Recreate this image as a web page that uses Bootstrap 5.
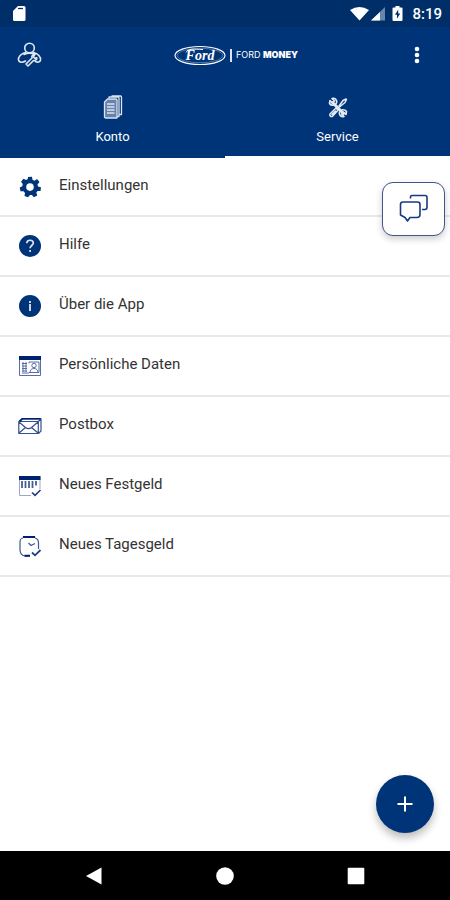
<!DOCTYPE html>
<html lang="de">
<head>
<meta charset="utf-8">
<meta name="viewport" content="width=device-width, initial-scale=1">
<title>Ford Money</title>
<link href="https://cdn.jsdelivr.net/npm/bootstrap@5.3.0/dist/css/bootstrap.min.css" rel="stylesheet">
<style>
  :root { --ford: #003478; --ford-dark: #002e69; }
  body { font-family: Roboto, "Liberation Sans", sans-serif; font-size: 14px; line-height: 20px; color: #333; }
  svg { display: block; flex: none; }
  .bg-ford { background: var(--ford); }
  .status-bar { background: var(--ford-dark); height: 27px; padding: 0 8px 0 12px; font-size: 15px; font-weight: 500; }
  .app-bar { height: 56px; padding: 0 16px; }
  .brand { padding-left: 28px; }
  .brand-name { font: 9px/12px Inter, sans-serif; }
  .brand-name b { font-weight: 900; }
  .brand-rule { width: 2px; height: 13px; background: #dce4ef; }
  .tab { height: 75px; padding-top: 12px; border: 0; border-bottom: 2px solid var(--ford); background: var(--ford); color: #fff; font-size: 13px; gap: 7px; }
  .tab.active { border-bottom-color: #fff; }
  .menu-row { height: 60px; padding: 0 18px 4px; gap: 17px; border-bottom: 2px solid #e9e9e9; color: #333; font-size: 15px; }
  .menu-row:first-child { height: 59px; padding-bottom: 3px; }
  .menu-row svg { margin-top: 4px; color: var(--ford); }
  .chat { top: 182px; right: 5px; width: 63px; height: 54px; border: 1px solid #40558f; border-radius: 11px; box-shadow: 0 3px 7px #0003; }
  .add { right: 16px; bottom: 18px; width: 58px; height: 58px; background: var(--ford); box-shadow: 0 5px 8px #0004; }
  .nav-bar { height: 49px; padding: 0 28px; }
  .nav-bar button { background: none; }
</style>
<script src="https://cdn.jsdelivr.net/npm/bootstrap@5.3.0/dist/js/bootstrap.bundle.min.js"></script>
</head>
<body class="bg-white">
<div class="d-flex flex-column min-vh-100">
  <header class="bg-ford text-white">
    <div class="status-bar d-flex align-items-center justify-content-between">
      <svg width="14" height="17" viewBox="0 0 14 17"><path fill="#fff" d="M6 1h6q1.500 0 1.500 1.500v12q0 1.500-1.500 1.500H2.500Q1 16 1 14.500V6z"/><path stroke="#002e69" stroke-width="1.300" d="M6 3.500h5"/></svg>
      <div class="d-flex align-items-center gap-1">
        <svg width="38" height="18" viewBox="0 0 38 18"><path fill="#fff" d="M0 5q9.500-6 19 0L9.500 15.500z"/><path fill="#6686ad" d="M35 2v13.500H21z"/><path fill="#fff" d="M30 7v8.500h-9z"/></svg>
        <svg width="12" height="18" viewBox="0 0 12 18"><path fill="#fff" d="M3.500 1h4v1.500h2q1 0 1 1V15q0 1-1 1h-8q-1 0-1-1V3.500q0-1 1-1h2z"/><path fill="#002e69" d="M6.200 4.500 3 9.800h2v4l3.200-5.300h-2z"/></svg>
        <span class="ms-1">8:19</span>
      </div>
    </div>
    <div class="app-bar d-flex align-items-center justify-content-between">
      <button class="btn p-0 border-0" aria-label="Abmelden">
        <svg width="28" height="28" viewBox="0 0 28 28" fill="none" stroke="#e1e8f2" stroke-width="1.600" stroke-linecap="round" stroke-linejoin="round"><circle cx="13.500" cy="7" r="4.800"/><path d="M9.500 11.500C5 12.500 2 16 2.500 19c.5 2.500 4 3 7 1M17.500 11.500c4.500 1 7.500 4.500 7 7.500-.5 2.500-3 2.500-5 1.500M8 13.500c3-1.500 8-1.500 11 0"/><path d="m10 23 6-6c-.6-2 .8-3.500 2.500-3l-1 2 1.300 1.300 2-.5c.3 1.700-1.300 3.200-3.300 2.700L12 25z"/></svg>
      </button>
      <div class="brand d-flex align-items-center gap-1">
        <svg width="52" height="21" viewBox="0 0 52 21" role="img" aria-label="Ford"><ellipse cx="26" cy="10.500" rx="25" ry="9" fill="none" stroke="#fff" stroke-width="1.100"/><ellipse cx="26" cy="10.500" rx="22.800" ry="7.200" fill="none" stroke="#8ba6c8" stroke-width=".6"/><text x="26" y="15" fill="#fff" text-anchor="middle" font-family="Liberation Serif, serif" font-size="14" font-style="italic" font-weight="bold">Ford</text><path d="M12 7.500C14 3.500 20 4 29 4.500" fill="none" stroke="#fff"/></svg>
        <span class="brand-rule"></span>
        <span class="brand-name">FORD <b>MONEY</b></span>
      </div>
      <button class="btn p-0 border-0" aria-label="Mehr">
        <svg width="34" height="20" viewBox="0 0 34 20" fill="#fff"><circle cx="17" cy="4" r="2.300"/><circle cx="17" cy="10" r="2.300"/><circle cx="17" cy="16" r="2.300"/></svg>
      </button>
    </div>
    <div class="row g-0" role="tablist">
      <button class="tab col d-flex flex-column align-items-center" role="tab" aria-selected="false">
        <svg width="20" height="25" viewBox="0 0 20 25" fill="none" stroke="#dce4ef" stroke-width="1.300" stroke-linejoin="round"><path fill="#6482ab" d="M4.500 4H13q1 0 1 1v18H3q-1.500 0-1.500-1.500V7z"/><path d="M6 3.500V2h9q1 0 1 1v18.500h-2M9 2V1h8.500q1 0 1 1v17.500H16M4 9h7.500M4 12h7.500M4 15h7.500M4 18h7.500"/></svg>
        <span>Konto</span>
      </button>
      <button class="tab active col d-flex flex-column align-items-center" role="tab" aria-selected="true">
        <svg width="22" height="25" viewBox="0 0 22 25" fill="none" stroke="#e4ebf4" stroke-linecap="round" stroke-linejoin="round"><path stroke-width="3" d="m5.500 7.500 11 11"/><path stroke-width="1.600" d="M3 5.500 5.500 8 7.500 6 5 3.500c3-.8 5.500 1.500 4.500 4.500C8.500 11 4 11 2.500 8.500zM19 19.500 16.500 17l-2 2 2.500 2.500c-3 .8-5.500-1.500-4.500-4.500 1-3 5.500-3 7-.5z"/><path stroke-width="1.500" d="m12 11 4-5.500 3-1.500.5.500L18 7.500 12.500 12zM9 13l-6 6c-.8 1.800.8 3 2.500 2.200l5.500-6zM5 19.500l3.500-3.500"/></svg>
        <span>Service</span>
      </button>
    </div>
  </header>
  <main class="position-relative flex-grow-1">
    <nav class="d-flex flex-column">
      <a href="#" class="menu-row d-flex align-items-center text-decoration-none">
        <svg width="24" height="24" viewBox="0 0 24 24"><path fill="currentColor" fill-rule="evenodd" d="m10 2 4-.2.500 3 2 .9 2.500-1.600 2.500 3-2 2.300.5 2 3 .8-.5 3.700-3 .1-1.200 1.700 1 2.900-3.500 1.700-1.800-2.400-2 .1L10 22.300l-3.500-1.400.5-3-1.500-1.700-3 .1-.8-3.700 2.600-1.300.4-2.200-1.700-2.400 2.400-2.900 2.700 1.300 1.700-1zM12 8.300a3.800 3.800 0 1 0 0 7.600 3.800 3.800 0 0 0 0-7.600z"/></svg>
        <span>Einstellungen</span>
      </a>
      <a href="#" class="menu-row d-flex align-items-center text-decoration-none">
        <svg width="24" height="24" viewBox="0 0 24 24"><circle cx="12" cy="12" r="11" fill="currentColor"/><path fill="none" stroke="#dce4f2" stroke-width="1.700" d="M8.800 9.200c0-4 6.500-3.800 6.500-.2 0 2.500-3.200 2.500-3.200 5.200M12.100 16v2"/></svg>
        <span>Hilfe</span>
      </a>
      <a href="#" class="menu-row d-flex align-items-center text-decoration-none">
        <svg width="24" height="24" viewBox="0 0 24 24"><circle cx="12" cy="12" r="11" fill="currentColor"/><path stroke="#c9d5e8" stroke-width="2" d="M12 7v2M12 10v7"/></svg>
        <span>Über die App</span>
      </a>
      <a href="#" class="menu-row d-flex align-items-center text-decoration-none">
        <svg width="24" height="24" viewBox="0 0 24 24" fill="none" stroke="#586fa5"><path d="M1.500 3v18.500h21V3"/><path fill="#002070" stroke="none" d="M1 2h22v4H1z"/><path d="M4 9.500h5M4 12h5M4 14.500h5M4 17h5M5 8v10M8 8v10M11 9.500V8h10v10.500H11M4 19h7"/><circle cx="16" cy="11.500" r="2.200"/><path d="M12 18.500c0-2.500 1.500-4 4-4s4 1.500 4 4"/></svg>
        <span>Persönliche Daten</span>
      </a>
      <a href="#" class="menu-row d-flex align-items-center text-decoration-none">
        <svg width="24" height="24" viewBox="0 0 24 24" fill="none" stroke="#354f91" stroke-width="1.200"><path d="M.8 7.500h19.500v12H.8zM1 7.500l3-2.500h19v12l-2.500 2.500M20.300 7.500 23 5M1 8l6.500 5.500q3 2.300 6 0L20 8M1 19l6.500-5.500M20 19l-6.500-5.500"/><path fill="#002070" stroke="none" d="M1 6.500 4 4h19l-.5 1.500H5L2 8z"/></svg>
        <span>Postbox</span>
      </a>
      <a href="#" class="menu-row d-flex align-items-center text-decoration-none">
        <svg width="24" height="24" viewBox="0 0 24 24" fill="none"><path stroke="#9ba9c9" d="M1.500 3v18.500H13M22 3v12"/><path fill="#002070" d="M1 2h21.500v4H1z"/><path stroke="#455d99" stroke-width="1.800" d="M4 7v7M7.500 7v7M11 7v7M14.500 7v7M18 7v4.500"/><path stroke="#203e88" stroke-width="1.700" d="m14 18.500 3 2.800 5.500-5.300"/></svg>
        <span>Neues Festgeld</span>
      </a>
      <a href="#" class="menu-row d-flex align-items-center text-decoration-none">
        <svg width="24" height="24" viewBox="0 0 24 24" fill="none" stroke="#3c5594" stroke-width="1.200"><path d="M5 4C3 4 2 6 2 8v8c0 3 2 6 5 6h5M17 4c2.500.5 3.500 2 3.500 5v6M5.500 4V2.500h11V4"/><path stroke="#001f70" stroke-width="2" d="M5 3h12M6.500 21.800H12"/><path d="m10.500 9 2.500 2.500 4-2"/><path stroke="#203e88" stroke-width="1.800" d="m14 18.500 3 2.800 5.500-5.300"/></svg>
        <span>Neues Tagesgeld</span>
      </a>
    </nav>
    <button class="add btn rounded-circle position-absolute p-0 border-0 d-flex align-items-center justify-content-center" aria-label="Hinzufügen">
      <svg width="16" height="16" viewBox="0 0 16 16"><path stroke="#fff" stroke-width="2" d="M8 .5v15M.5 8h15"/></svg>
    </button>
  </main>
  <footer class="nav-bar bg-black d-flex align-items-center justify-content-around">
    <button class="border-0 p-0" aria-label="Zurück"><svg width="18" height="18" viewBox="0 0 18 18"><path fill="#fff" d="M16.500.5v17L1 9z"/></svg></button>
    <button class="border-0 p-0" aria-label="Startseite"><svg width="18" height="18" viewBox="0 0 18 18"><circle cx="9" cy="9" r="8.800" fill="#fff"/></svg></button>
    <button class="border-0 p-0" aria-label="Übersicht"><svg width="18" height="18" viewBox="0 0 18 18"><rect x=".7" y=".7" width="16.600" height="16.600" rx="1" fill="#fff"/></svg></button>
  </footer>
</div>
<button class="chat btn bg-white position-absolute p-0 d-flex align-items-center justify-content-center" aria-label="Chat">
  <svg width="30" height="30" viewBox="0 0 30 30" fill="none" stroke="#173a83" stroke-width="1.600" stroke-linejoin="round"><path d="M4 8h14.500q2.500 0 2.500 2.500v10q0 3-3 3h-7L8.500 27 6 23.500 1.500 21V10.500Q1.500 8 4 8zM11.500 4.500V3q0-1.500 1.500-1.500h13q2 0 2 2V13q0 2.500-2 2.500h-3"/></svg>
</button>
</body>
</html>
